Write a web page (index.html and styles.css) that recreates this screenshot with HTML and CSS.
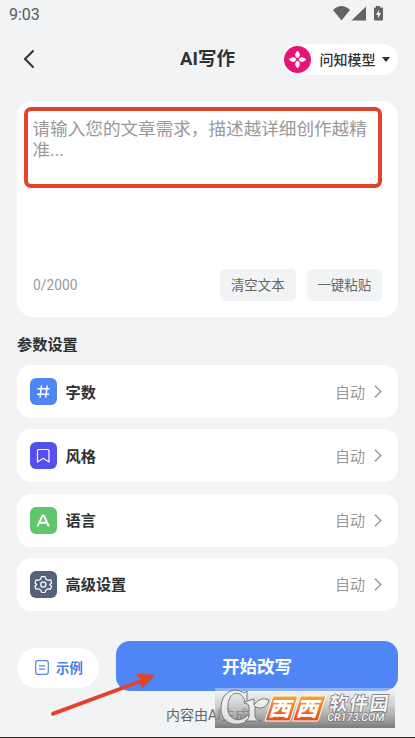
FILE: index.html
```html
<!DOCTYPE html>
<html lang="zh-CN">
<head>
<meta charset="utf-8">
<title>AI写作</title>
<link rel="stylesheet" href="styles.css">
</head>
<body>
<div class="screen">
  <div class="status">
    <span>9:03</span>
    <svg class="status-icons" width="52" height="16" viewBox="0 0 52 16" fill="#626365">
      <path d="M0 4Q8.500-4 17 4L8.500 14.500Z"/><path d="M33 0.500V14.500H18.500Z"/>
      <path d="M41 2.500Q41 1.500 42 1.500H43V0H47V1.500H49Q50 1.500 50 2.500V13.500Q50 14.500 49 14.500H42Q41 14.500 41 13.500Z"/>
      <path d="M46 3.500 43 9H45V12.500L48 7H46Z" fill="#f1f3f5"/>
    </svg>
  </div>
  <header class="header">
    <svg class="back" width="14" height="20" viewBox="0 0 14 20"><path d="M11 2 3 10 11 18" fill="none" stroke="#303133" stroke-width="2" stroke-linecap="round"/></svg>
    <h1>AI写作</h1>
    <div class="model">
      <svg width="27" height="27" viewBox="0 0 27 27"><circle cx="13.500" cy="13.500" r="13.500" fill="#e6147a"/><g fill="#fff"><path id="petal" d="M13.500 4.800C16.800 8 16.300 11 13.500 12.300C10.700 11 10.200 8 13.500 4.800Z"/><use href="#petal" transform="rotate(90 13.500 13.500)"/><use href="#petal" transform="rotate(180 13.500 13.500)"/><use href="#petal" transform="rotate(270 13.500 13.500)"/></g></svg>
      <span>问知模型</span>
      <svg width="8" height="5" viewBox="0 0 8 5"><path d="M0 0H8L4.500 4.600Q4 5 3.500 4.600Z" fill="#303133"/></svg>
    </div>
  </header>
  <section class="editor">
    <div class="prompt">请输入您的文章需求，描述越详细创作越精准...</div>
    <div class="tools"><span class="count">0/2000</span><span class="tool">清空文本</span><span class="tool">一键粘贴</span></div>
  </section>
  <h2>参数设置</h2>
  <div class="rows">
    <div class="row">
      <svg class="icon blue" viewBox="0 0 27 27"><path d="M11.500 7.500 10 19.500M17.200 7.500 15.700 19.500M7.500 10.700H19.500M7 16.300H19"/></svg>
      <span class="label">字数</span><span class="value">自动</span>
      <svg class="chevron" viewBox="0 0 8 13"><path d="M1 .8 6.800 6.500 1 12.200"/></svg>
    </div>
    <div class="row">
      <svg class="icon violet" viewBox="0 0 27 27"><path d="M8.500 7.500H18Q19 7.500 19 8.500V20L13.300 16.300 7.500 20V8.500Q7.500 7.500 8.500 7.500Z"/></svg>
      <span class="label">风格</span><span class="value">自动</span>
      <svg class="chevron" viewBox="0 0 8 13"><path d="M1 .8 6.800 6.500 1 12.200"/></svg>
    </div>
    <div class="row">
      <svg class="icon green" viewBox="0 0 27 27"><path d="M7.500 19.300 12.500 8.500H13.800L18.800 19.300M9.500 15.700H17"/></svg>
      <span class="label">语言</span><span class="value">自动</span>
      <svg class="chevron" viewBox="0 0 8 13"><path d="M1 .8 6.800 6.500 1 12.200"/></svg>
    </div>
    <div class="row">
      <svg class="icon slate" viewBox="0 0 27 27"><path d="M11.400 5.600H15L16 8.200 18.300 9.400 20.800 8.900 21.600 12 19.800 13.500 21.600 15.300 20.500 18.200 18 17.800 16 19 15 21.500H11.800L10.700 19 8.500 17.800 6 18.200 4.900 15.300 6.800 13.500 4.900 11.800 6 8.900 8.500 9.300 10.600 8.200Z"/><circle cx="13.300" cy="13.500" r="2.600"/></svg>
      <span class="label">高级设置</span><span class="value">自动</span>
      <svg class="chevron" viewBox="0 0 8 13"><path d="M1 .8 6.800 6.500 1 12.200"/></svg>
    </div>
  </div>
  <div class="actions">
    <div class="example"><svg width="14" height="15" viewBox="0 0 14 15"><rect x=".7" y=".7" width="12.600" height="13.600" rx="2.200"/><path d="M4 5.800H10M4 9.200H10"/></svg><span>示例</span></div>
    <div class="start">开始改写</div>
  </div>
  <p class="note">内容由AI生成</p>
  <svg class="pointer" width="110" height="48" viewBox="0 0 110 48"><path d="M1 42.500Q1 45.500 4 44.500L90 12.500 92.300 17.500 105.500 4 86 2.500 90 8.500 2 41Z" fill="#e2432b"/></svg>
  <svg class="watermark" width="180" height="40" viewBox="0 0 180 40">
    <defs>
      <linearGradient id="shade" x2="0" y2="1"><stop stop-color="#fff" stop-opacity=".35"/><stop offset=".25" stop-color="#ccc" stop-opacity=".5"/><stop offset="1" stop-color="#666" stop-opacity=".85"/></linearGradient>
      <linearGradient id="orange" x2="0" y2="1"><stop stop-color="#f7a62b"/><stop offset="1" stop-color="#e64d20"/></linearGradient>
    </defs>
    <rect width="180" height="40" fill="url(#shade)"/>
    <g fill="#f1f1f1" fill-opacity=".85" stroke="#777" stroke-width="1" stroke-linejoin="round">
      <path d="M32 3V14H30C28 3 15 1 13 16C11 32 24 36 33 27L36 30C27 40 5 39 6 19C7 2 21-1 29 5Z"/>
      <path d="M29 14 39 11V17Q45 8 54 12Q52 21 43 20L40 18V29Q41 32 46 33H30Q34 32 34 28V18Q33 15 29 15Z"/>
    </g>
    <g transform="skewX(-17.700)" fill="url(#orange)" stroke="#fff" stroke-width="1"><rect x="60.500" y="8" width="25" height="25" rx="1"/><rect x="88" y="8" width="25.500" height="25" rx="1"/></g>
    <g transform="skewX(-17.700)" class="brand"><text x="62" y="28" textLength="22" lengthAdjust="spacingAndGlyphs">西</text><text x="89.500" y="28" textLength="22" lengthAdjust="spacingAndGlyphs">西</text></g>
    <g transform="skewX(-9)" class="site"><text x="117" y="22" textLength="59">软件园</text><text class="domain" x="117" y="33" textLength="57" lengthAdjust="spacingAndGlyphs">CR173.COM</text></g>
  </svg>
  <div class="bottom"></div>
</div>
</body>
</html>
```
FILE: styles.css
```css
* { box-sizing: border-box; }
body { margin: 0; background: #f1f3f5; color: #303133; font-family: Roboto, "Noto Sans CJK SC", sans-serif; }
h1, h2, p { margin: 0; }
svg { display: block; flex: none; }
.screen { position: relative; display: flex; flex-direction: column; width: 415px; height: 738px; padding: 0 17px; overflow: hidden; }
.status { display: flex; justify-content: space-between; height: 29px; margin: 0 -8px; padding-top: 6px; font-size: 16px; line-height: 18px; color: #58595b; }
.status-icons { margin-right: 21px; }
.header { display: grid; grid-template-columns: 1fr auto 1fr; align-items: center; height: 60px; }
.back { margin-left: 5px; }
h1 { font-size: 18.5px; line-height: 28px; font-weight: 700; }
.model { justify-self: end; display: flex; align-items: center; width: 116px; height: 31px; padding-left: 2px; border-radius: 16px; background: #fff; font-size: 14px; font-weight: 500; }
.model span { margin: -1px 6px 0 9px; }
.model svg:first-child { margin-left: -0.500px; }
.editor { display: flex; flex-direction: column; justify-content: space-between; height: 216px; margin-top: 12px; padding: 6px 16px 16px 7px; border-radius: 16px; background: #fff; }
.prompt { width: 358px; height: 81px; padding: 8px 0 0 4.500px; border: 4px solid #e2432b; border-radius: 7px; color: #999; font-size: 17.6px; line-height: 21px; }
.tools { display: flex; align-items: center; gap: 11px; padding-left: 9px; color: #666; font-size: 13.4px; }
.count { margin-right: auto; color: #999; font-size: 13.800px; }
.tool { width: 75.500px; height: 32px; border-radius: 5px; background: #f1f3f5; line-height: 33px; text-align: center; }
h2 { height: 48px; padding-top: 17px; font-size: 15.2px; line-height: 23px; font-weight: 700; }
.rows { display: flex; flex-direction: column; gap: 11.300px; }
.row { display: flex; align-items: center; height: 53px; padding: 0 16px 0 13px; border-radius: 14px; background: #fff; }
.icon { width: 27px; height: 27px; border-radius: 6px; fill: none; stroke: #fff; stroke-width: 1.200; stroke-linejoin: round; }
.blue { background: #5085f5; stroke-width: 1.500; }
.violet { background: #5550ed; }
.green { background: #61c56c; stroke-width: 1.900; }
.slate { background: #56617e; }
.label { margin: -2px 0 0 8.500px; font-size: 15.200px; font-weight: 700; }
.value { margin: -1px 0 0 auto; color: #999; font-size: 15px; }
.chevron { width: 8px; height: 13px; margin-left: 9px; fill: none; stroke: #999; stroke-width: 1.500; }
.actions { display: flex; align-items: center; gap: 17px; margin-top: 30px; }
.example { display: flex; align-items: center; justify-content: center; gap: 7px; width: 82px; height: 40px; margin-top: 4px; padding-left: 2px; border-radius: 20px; background: #fff; color: #4c80e8; font-size: 13.400px; font-weight: 700; }
.example span { margin-top: -1px; }
.example svg { fill: none; stroke: #5585e5; stroke-width: 1.200; }
.start { width: 282px; height: 50px; border-radius: 14px; background: #5085f6; color: #fff; font-size: 17.500px; font-weight: 700; line-height: 52px; text-align: center; }
.note { margin-top: 14px; color: #666; font-size: 14px; line-height: 21px; text-align: center; }
.pointer { position: absolute; left: 50px; top: 671px; }
.watermark { position: absolute; left: 215px; top: 688px; }
.brand { fill: #fff; font-size: 20px; font-weight: 900; }
.site { fill: #f5f5f5; stroke: #777; stroke-width: 1.500px; paint-order: stroke; font-size: 18.500px; font-weight: 700; }
.domain { font-size: 11px; font-weight: 500; }
.bottom { position: absolute; left: 0; right: 0; bottom: 0; height: 1px; background: #292522; }
```
